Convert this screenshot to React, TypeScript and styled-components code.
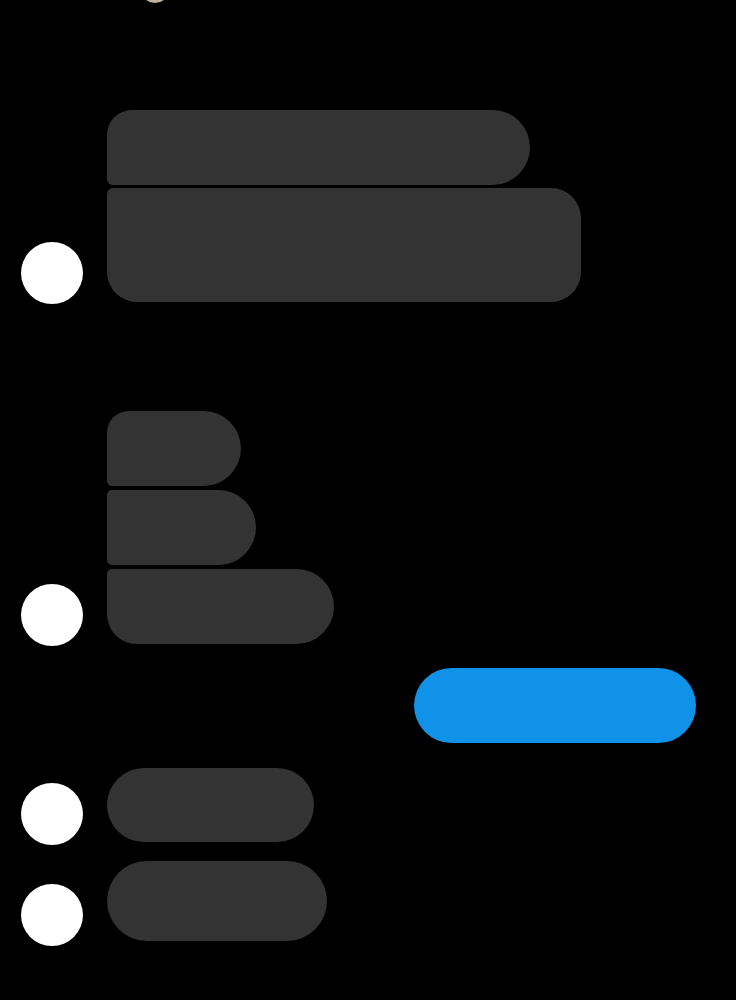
import React from "react";
import styled, { createGlobalStyle } from "styled-components";

const Global = createGlobalStyle`
  html, body { margin: 0; padding: 0; background: #000; }
  body { font-family: "Liberation Sans", Arial, sans-serif; overflow: hidden; }
`;

const Screen = styled.div`
  width: 736px;
  height: 1000px;
  background: #000;
  display: flex;
  flex-direction: column;
  overflow: hidden;
`;

const PeekAvatar = styled.div`
  width: 30px;
  height: 30px;
  border-radius: 50%;
  background: #bdb39c;
  margin: -27px 0 0 140px;
  flex-shrink: 0;
`;

const Group = styled.div<{ $top: number }>`
  display: flex;
  align-items: flex-end;
  gap: 24px;
  padding-left: 21px;
  margin-top: ${(p) => p.$top}px;
`;

const Avatar = styled.div<{ $drop?: number }>`
  width: 62px;
  height: 62px;
  border-radius: 50%;
  background: #fff;
  flex-shrink: 0;
  margin-bottom: -${(p) => p.$drop ?? 3}px;
`;

const Stack = styled.div<{ $gap?: number }>`
  display: flex;
  flex-direction: column;
  gap: ${(p) => p.$gap ?? 3}px;
`;

type Radii = [number, number, number, number];

const Bubble = styled.div<{ $w: number; $h?: number; $r: Radii }>`
  width: ${(p) => p.$w}px;
  height: ${(p) => p.$h ?? 75}px;
  background: #333333;
  border-radius: ${(p) => p.$r.map((v) => `${v}px`).join(" ")};
`;

const SentBubble = styled.div`
  align-self: flex-end;
  margin: 24px 40px 0 0;
  width: 282px;
  height: 75px;
  border-radius: 38px;
  background: #1192e9;
`;

export default function App() {
  return (
    <>
      <Global />
      <Screen>
        <PeekAvatar />
        <Group $top={107}>
          <Avatar $drop={2} />
          <Stack>
            <Bubble $w={423} $r={[25, 38, 38, 6]} />
            <Bubble $w={474} $h={114} $r={[6, 30, 30, 30]} />
          </Stack>
        </Group>
        <Group $top={109}>
          <Avatar $drop={2} />
          <Stack $gap={4}>
            <Bubble $w={134} $r={[22, 38, 38, 5]} />
            <Bubble $w={149} $r={[5, 38, 38, 5]} />
            <Bubble $w={227} $r={[5, 38, 38, 30]} />
          </Stack>
        </Group>
        <SentBubble />
        <Group $top={25}>
          <Avatar />
          <Stack>
            <Bubble $w={207} $h={74} $r={[37, 37, 37, 37]} />
          </Stack>
        </Group>
        <Group $top={19}>
          <Avatar $drop={5} />
          <Stack>
            <Bubble $w={220} $h={80} $r={[40, 40, 40, 40]} />
          </Stack>
        </Group>
      </Screen>
    </>
  );
}
